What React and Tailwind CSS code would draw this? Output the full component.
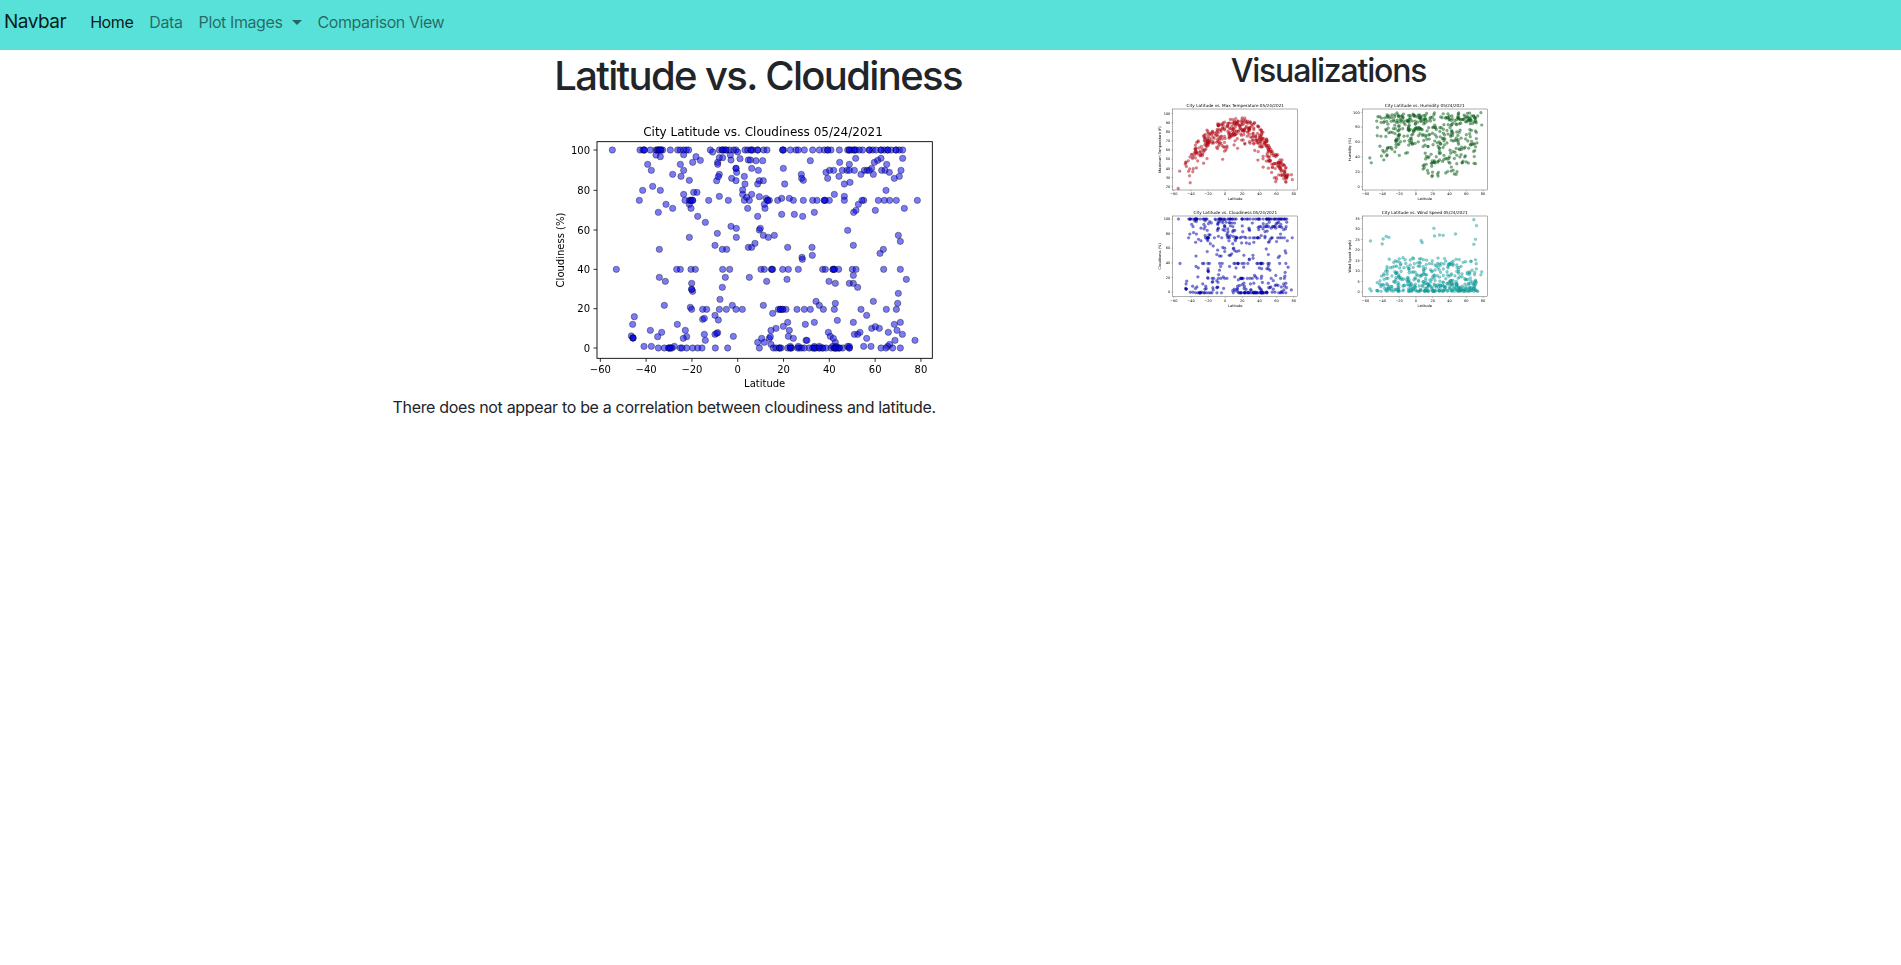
const row = (y, xs) => xs.map((x) => [x, y]);

const BASE = [
  ...row(120, [214, 297, 306, 310, 328, 345, 350, 355, 360, 365, 388, 410, 418, 428, 436, 443, 508, 535, 543, 548, 555, 565, 578, 585, 612, 620, 630, 635, 650, 668, 678, 725, 728, 748, 765, 772, 790, 815, 835, 850, 860, 870, 895, 920, 925, 932, 940, 945, 955, 965, 985, 995, 1005, 1020, 1030, 1040, 1050, 1065, 1075, 1085]),
  [515, 126], [590, 126], [345, 135], [358, 140], [428, 134], [418, 163], [320, 163], [331, 181], [428, 181], [395, 193], [420, 199], [445, 211], [465, 140], [478, 151], [455, 157], [530, 157], [535, 143], [545, 143], [570, 150], [568, 135], [597, 146], [585, 175], [587, 187], [572, 205], [585, 212], [610, 199], [622, 150], [628, 150], [632, 175], [645, 152], [665, 152], [652, 181], [655, 212], [667, 212], [650, 222], [612, 222], [527, 212], [535, 193], [532, 200], [530, 163], [727, 175], [731, 222], [781, 193], [782, 205], [787, 211], [808, 152], [855, 187], [860, 205], [866, 181], [878, 181], [896, 157], [894, 199], [904, 181], [910, 222], [918, 181], [925, 163], [925, 181], [927, 217], [940, 181], [944, 145], [960, 193], [970, 181], [978, 181], [985, 181], [992, 175], [997, 193], [1000, 157], [1010, 151], [1020, 145], [1022, 181], [1032, 181], [1037, 163], [1045, 187], [1060, 205], [1075, 199], [1080, 181], [1085, 145],
  [305, 241], [358, 241], [1035, 241], [428, 253], [458, 247], [468, 247], [605, 240], [605, 253], [632, 253], [617, 262], [655, 260], [675, 265], [535, 259], [722, 265], [745, 265], [880, 253], [910, 259],
  ...row(271, [295, 445, 450, 455, 432, 503, 562, 610, 625, 680, 685, 710, 757, 787, 815, 828, 850, 853, 865, 910, 968, 1012, 1030, 1046, 1066, 1129]),
  [445, 283], [450, 295], [335, 229], [670, 283], [672, 295], [620, 295], [395, 295], [375, 283], [352, 307], [470, 319], [493, 337], [760, 313], [722, 313], [785, 319], [650, 319], [820, 307], [1003, 301], [938, 307], [945, 301], [952, 283], [963, 271], [1090, 295],
  [570, 349], [586, 355], [655, 360], [658, 355], [667, 376], [682, 382], [700, 376], [445, 382], [529, 370], [586, 382], [1072, 376], [920, 361], [1078, 394], [937, 406], [355, 418], [522, 406], [544, 418], [557, 418], [622, 412], [632, 412], [642, 400], [740, 412], [813, 412], [1017, 430], [1027, 418],
  ...row(478, [226, 407, 418, 450, 463, 545, 566, 660, 670, 692, 695, 725, 742, 772, 845, 853, 876, 880, 893, 934, 945, 1028, 1078]),
  [355, 502], [373, 514], [452, 520], [452, 538], [455, 544], [553, 502], [544, 532], [625, 502], [677, 514], [738, 508], [783, 442], [784, 448], [814, 436], [864, 514], [883, 520], [925, 520], [937, 520], [937, 496], [950, 532], [1096, 508], [1072, 550],
  [370, 586], [448, 592], [452, 598], [485, 598], [497, 598], [556, 598], [585, 598], [604, 598], [537, 568], [574, 586], [535, 598], [667, 586], [695, 610], [712, 598], [718, 598], [725, 598], [735, 598], [768, 598], [790, 598], [808, 598], [825, 574], [835, 586], [847, 598], [880, 598], [883, 580], [960, 598], [997, 574], [1036, 598], [1066, 598], [1070, 580],
  [275, 643], [280, 620], [485, 628], [490, 625], [522, 616], [532, 630], [409, 643], [328, 661], [362, 667], [433, 661], [350, 680], [437, 680], [427, 685], [271, 678], [276, 684], [490, 673], [493, 691], [522, 673], [530, 668], [577, 679], [690, 661], [705, 655], [727, 649], [740, 637], [745, 661], [742, 679], [757, 685], [793, 643], [820, 637], [889, 631], [862, 667], [868, 679], [877, 685], [883, 697], [937, 637], [940, 673], [950, 673], [957, 667], [977, 685], [977, 616], [992, 655], [1003, 650], [1015, 655], [1042, 667], [1060, 643], [1068, 661], [1078, 637], [1084, 673], [1062, 691], [1122, 691], [650, 697], [662, 685], [670, 697], [685, 685], [688, 680], [795, 691], [798, 691],
  [309, 709], [331, 709], [400, 709], [968, 709], [990, 709], [1040, 709], [1046, 703], [690, 703],
  ...row(714, [352, 370, 383, 388, 393, 418, 423, 437, 455, 470, 483, 523, 560, 655, 697, 705, 715, 720, 740, 748, 752, 770, 775, 782, 790, 805, 815, 820, 825, 835, 845, 855, 870, 880, 885, 890, 895, 905, 925, 1020, 1035, 1055, 1078]),
  ...row(709, [748, 772, 820, 835, 875, 885, 920, 925]),
];

const MAIN = BASE.concat(
  row(120, [310, 350, 355, 360, 545, 555, 630, 650, 725, 860, 925, 940, 985, 1020, 1040, 1065]),
  row(714, [383, 388, 715, 748, 820, 835, 845, 880, 885, 895, 925]),
  row(271, [450, 455, 680, 850]),
  row(598, [718, 725]),
  row(478, [692, 876, 880]),
  [[276, 684], [276, 684], [585, 175], [527, 670], [452, 538]]
);

function makeRandom(seed) {
  let s = seed;
  return () => {
    s = (s * 1664525 + 1013904223) % 4294967296;
    return s / 4294967296;
  };
}

const latOf = (x) => (x - 591) / 6.87;

const tempCurve = (lat) => {
  const knots = [[-56, 30], [-46, 38], [-38, 56], [-28, 62], [-20, 74], [-8, 79], [5, 83], [15, 88], [25, 84], [35, 82], [45, 68], [55, 50], [65, 42], [72, 30], [80, 30]];
  for (let i = 1; i < knots.length; i++) {
    if (lat <= knots[i][0]) {
      const [a, b] = knots[i - 1];
      const [c, d] = knots[i];
      return b + ((lat - a) / (c - a)) * (d - b);
    }
  }
  return 30;
};

const rand1 = makeRandom(11);
const T1 = BASE.map(([x]) => {
  const lat = latOf(x);
  const n = (rand1() - 0.5) * 20 - (rand1() < 0.3 ? rand1() * 22 : 0);
  return [100 + ((lat + 60) / 140) * 360, 55 + (100 - (tempCurve(lat) + n)) * 2.75];
});

const rand2 = makeRandom(29);
const T2 = BASE.map(([x]) => {
  const lat = latOf(x);
  const low = lat < -30 ? 30 : lat < -10 ? 42 : lat < 8 ? 55 : lat < 20 ? 10 : lat < 50 ? 12 : 30;
  const high = 92 + rand2() * 8;
  const t = Math.pow(rand2(), 1.5);
  return [675 + ((lat + 60) / 140) * 353, 52 + (100 - high + t * (high - low)) * 2.23];
});

const rand4 = makeRandom(47);
const T4 = BASE.map(([x]) => {
  const lat = latOf(x);
  const v = 0.3 + 16 * Math.pow(rand4(), 1.9);
  return [675 + ((lat + 60) / 140) * 353, 591 - v * 6.31];
}).concat([[1000, 374], [1008, 392], [880, 400], [882, 423], [897, 420], [908, 421], [945, 417], [690, 438], [728, 432], [737, 424], [745, 427], [725, 447], [842, 437], [845, 443], [1005, 433], [1000, 448]]);

const T3 = MAIN.map(([x, y]) => [97 + ((x - 168) / 1006) * 375, 363 + ((y - 95) / 650) * 242]);

const range = (from, count, step) => Array.from({ length: count }, (_, i) => from + i * step);
const label = (n) => (n < 0 ? `\u2212${-n}` : `${n}`);

function Chart({ box, axes, xTicks, yTicks, title, xLabel, yLabel, points, fill, edge, r, sw, scale, labelOffset, titleShift, className }) {
  const [l, t, rr, b] = axes;
  const tick = scale * 3.5;
  const fs = scale * 10;
  const cx = (l + rr) / 2;
  const cy = (t + b) / 2;
  const font = "'DejaVu Sans', sans-serif";
  return (
    <svg viewBox={box.join(" ")} width={box[2] / 3} height={box[3] / 3} className={className}>
      {points.map(([x, y], i) => (
        <circle key={i} cx={x} cy={y} r={r} fill={fill} fillOpacity="0.52" stroke={edge} strokeOpacity="0.55" strokeWidth={sw} />
      ))}
      <rect x={l} y={t} width={rr - l} height={b - t} fill="none" stroke="#000" strokeWidth={scale * 0.9} />
      {xTicks.map(([p, n]) => (
        <g key={n}>
          <line x1={p} x2={p} y1={b} y2={b + tick} stroke="#000" strokeWidth={scale * 0.8} />
          <text x={p} y={b + tick + fs * 1.15} fontSize={fs} textAnchor="middle" fontFamily={font} fill="#000">{label(n)}</text>
        </g>
      ))}
      {yTicks.map(([p, n]) => (
        <g key={n}>
          <line x1={l - tick} x2={l} y1={p} y2={p} stroke="#000" strokeWidth={scale * 0.8} />
          <text x={l - tick - fs * 0.35} y={p + fs * 0.37} fontSize={fs} textAnchor="end" fontFamily={font} fill="#000">{label(n)}</text>
        </g>
      ))}
      <text x={cx + titleShift} y={t - scale * 5.5} fontSize={scale * 12} textAnchor="middle" fontFamily={font} fill="#000">{title}</text>
      <text x={cx} y={b + tick + fs * 2.55} fontSize={fs} textAnchor="middle" fontFamily={font} fill="#000">{xLabel}</text>
      <text transform={`translate(${l - labelOffset} ${cy}) rotate(-90)`} fontSize={fs} textAnchor="middle" fontFamily={font} fill="#000">{yLabel}</text>
    </svg>
  );
}

const xScale = (at0, per20) => range(-60, 8, 20).map((n) => [at0 + ((n + 60) / 20) * per20, n]);

export default function App() {
  return (
    <div className="min-h-[965px] bg-white text-[#212529] font-['Inter','Liberation_Sans',sans-serif] tracking-[-0.33px]">
      <nav className="flex h-[50px] items-start bg-[#57e1d8] pt-[2px] pl-[4px]">
        <a className="mr-4 flex h-10 items-center text-[19px] tracking-[-0.5px] text-black/90">Navbar</a>
        <a className="flex h-10 items-center px-2 text-base tracking-[-0.4px] text-black/90">Home</a>
        <a className="flex h-10 items-center px-2 text-base tracking-[-0.4px] text-black/55">Data</a>
        <a className="flex h-10 items-center px-2 text-base tracking-[-0.4px] text-black/55">
          Plot Images
          <span className="ml-[9px] mt-[1px] h-0 w-0 border-x-[5px] border-t-[5px] border-x-transparent border-t-current"></span>
        </a>
        <a className="flex h-10 items-center px-2 text-base tracking-[-0.45px] text-black/55">Comparison View</a>
      </nav>

      <main className="mx-auto flex w-[1140px]">
        <section className="w-[760px] px-3">
          <h1 className="mb-[7px] mt-[2px] pr-[5px] text-center text-[40px] leading-[48px] font-medium tracking-[-1.65px]">Latitude vs. Cloudiness</h1>
          <div className="flex justify-center">
            <Chart
              box={[0, -9, 1320, 864]}
              axes={[168, 95, 1174, 745]}
              xTicks={xScale(178, 137.4)}
              yTicks={[[714, 0], [596, 20], [478, 40], [360, 60], [241, 80], [120, 100]]}
              title="City Latitude vs. Cloudiness 05/24/2021"
              xLabel="Latitude"
              yLabel="Cloudiness (%)"
              points={MAIN}
              fill="#0000f0"
              edge="#000"
              r={9.5}
              sw={2}
              scale={3}
              labelOffset={100}
              titleShift={-5}
              className="block shrink-0 tracking-normal blur-[0.25px]"
            />
          </div>
          <p className="text-base leading-6">There does not appear to be a correlation between cloudiness and latitude.</p>
        </section>

        <aside className="w-[380px] px-3">
          <h2 className="mb-[12px] mt-[2px] pr-[4px] text-center text-[32px] leading-[38px] font-medium tracking-[-1.2px]">Visualizations</h2>
          <div className="grid grid-cols-[150px_150px] gap-x-[45px] gap-y-[6px]">
            <Chart
              box={[37.6, 21, 450, 300]}
              axes={[97, 42, 472, 285]}
              xTicks={xScale(100, 51.4)}
              yTicks={range(20, 9, 10).map((n) => [55 + (100 - n) * 2.75, n])}
              title="City Latitude vs. Max Temperature 05/24/2021"
              xLabel="Latitude"
              yLabel="Maximum Temperature (F)"
              points={T1}
              fill="#c01020"
              edge="#800000"
              r={4.3}
              sw={0.8}
              scale={1.05}
              labelOffset={35}
              titleShift={0}
              className="block tracking-normal blur-[0.7px]"
            />
            <Chart
              box={[622.5, 21, 450, 300]}
              axes={[665, 42, 1040, 285]}
              xTicks={xScale(675, 50.4)}
              yTicks={range(0, 6, 20).map((n) => [275 - n * 2.23, n])}
              title="City Latitude vs. Humidity 05/24/2021"
              xLabel="Latitude"
              yLabel="Humidity (%)"
              points={T2}
              fill="#0b6b20"
              edge="#003000"
              r={4.3}
              sw={0.8}
              scale={1.05}
              labelOffset={33}
              titleShift={0}
              className="block tracking-normal blur-[0.7px]"
            />
            <Chart
              box={[37.6, 339, 450, 300]}
              axes={[97, 363, 472, 605]}
              xTicks={xScale(100, 51.4)}
              yTicks={range(0, 6, 20).map((n) => [591 - n * 2.19, n])}
              title="City Latitude vs. Cloudiness 05/24/2021"
              xLabel="Latitude"
              yLabel="Cloudiness (%)"
              points={T3}
              fill="#0000c8"
              edge="#000050"
              r={4.3}
              sw={0.8}
              scale={1.05}
              labelOffset={35}
              titleShift={0}
              className="block tracking-normal blur-[0.7px]"
            />
            <Chart
              box={[622.5, 339, 450, 300]}
              axes={[665, 363, 1040, 605]}
              xTicks={xScale(675, 50.4)}
              yTicks={range(0, 8, 5).map((n) => [591 - n * 6.31, n])}
              title="City Latitude vs. Wind Speed 05/24/2021"
              xLabel="Latitude"
              yLabel="Wind Speed (mph)"
              points={T4}
              fill="#10b0b0"
              edge="#005050"
              r={4.3}
              sw={0.8}
              scale={1.05}
              labelOffset={33}
              titleShift={0}
              className="block tracking-normal blur-[0.7px]"
            />
          </div>
        </aside>
      </main>
    </div>
  );
}
